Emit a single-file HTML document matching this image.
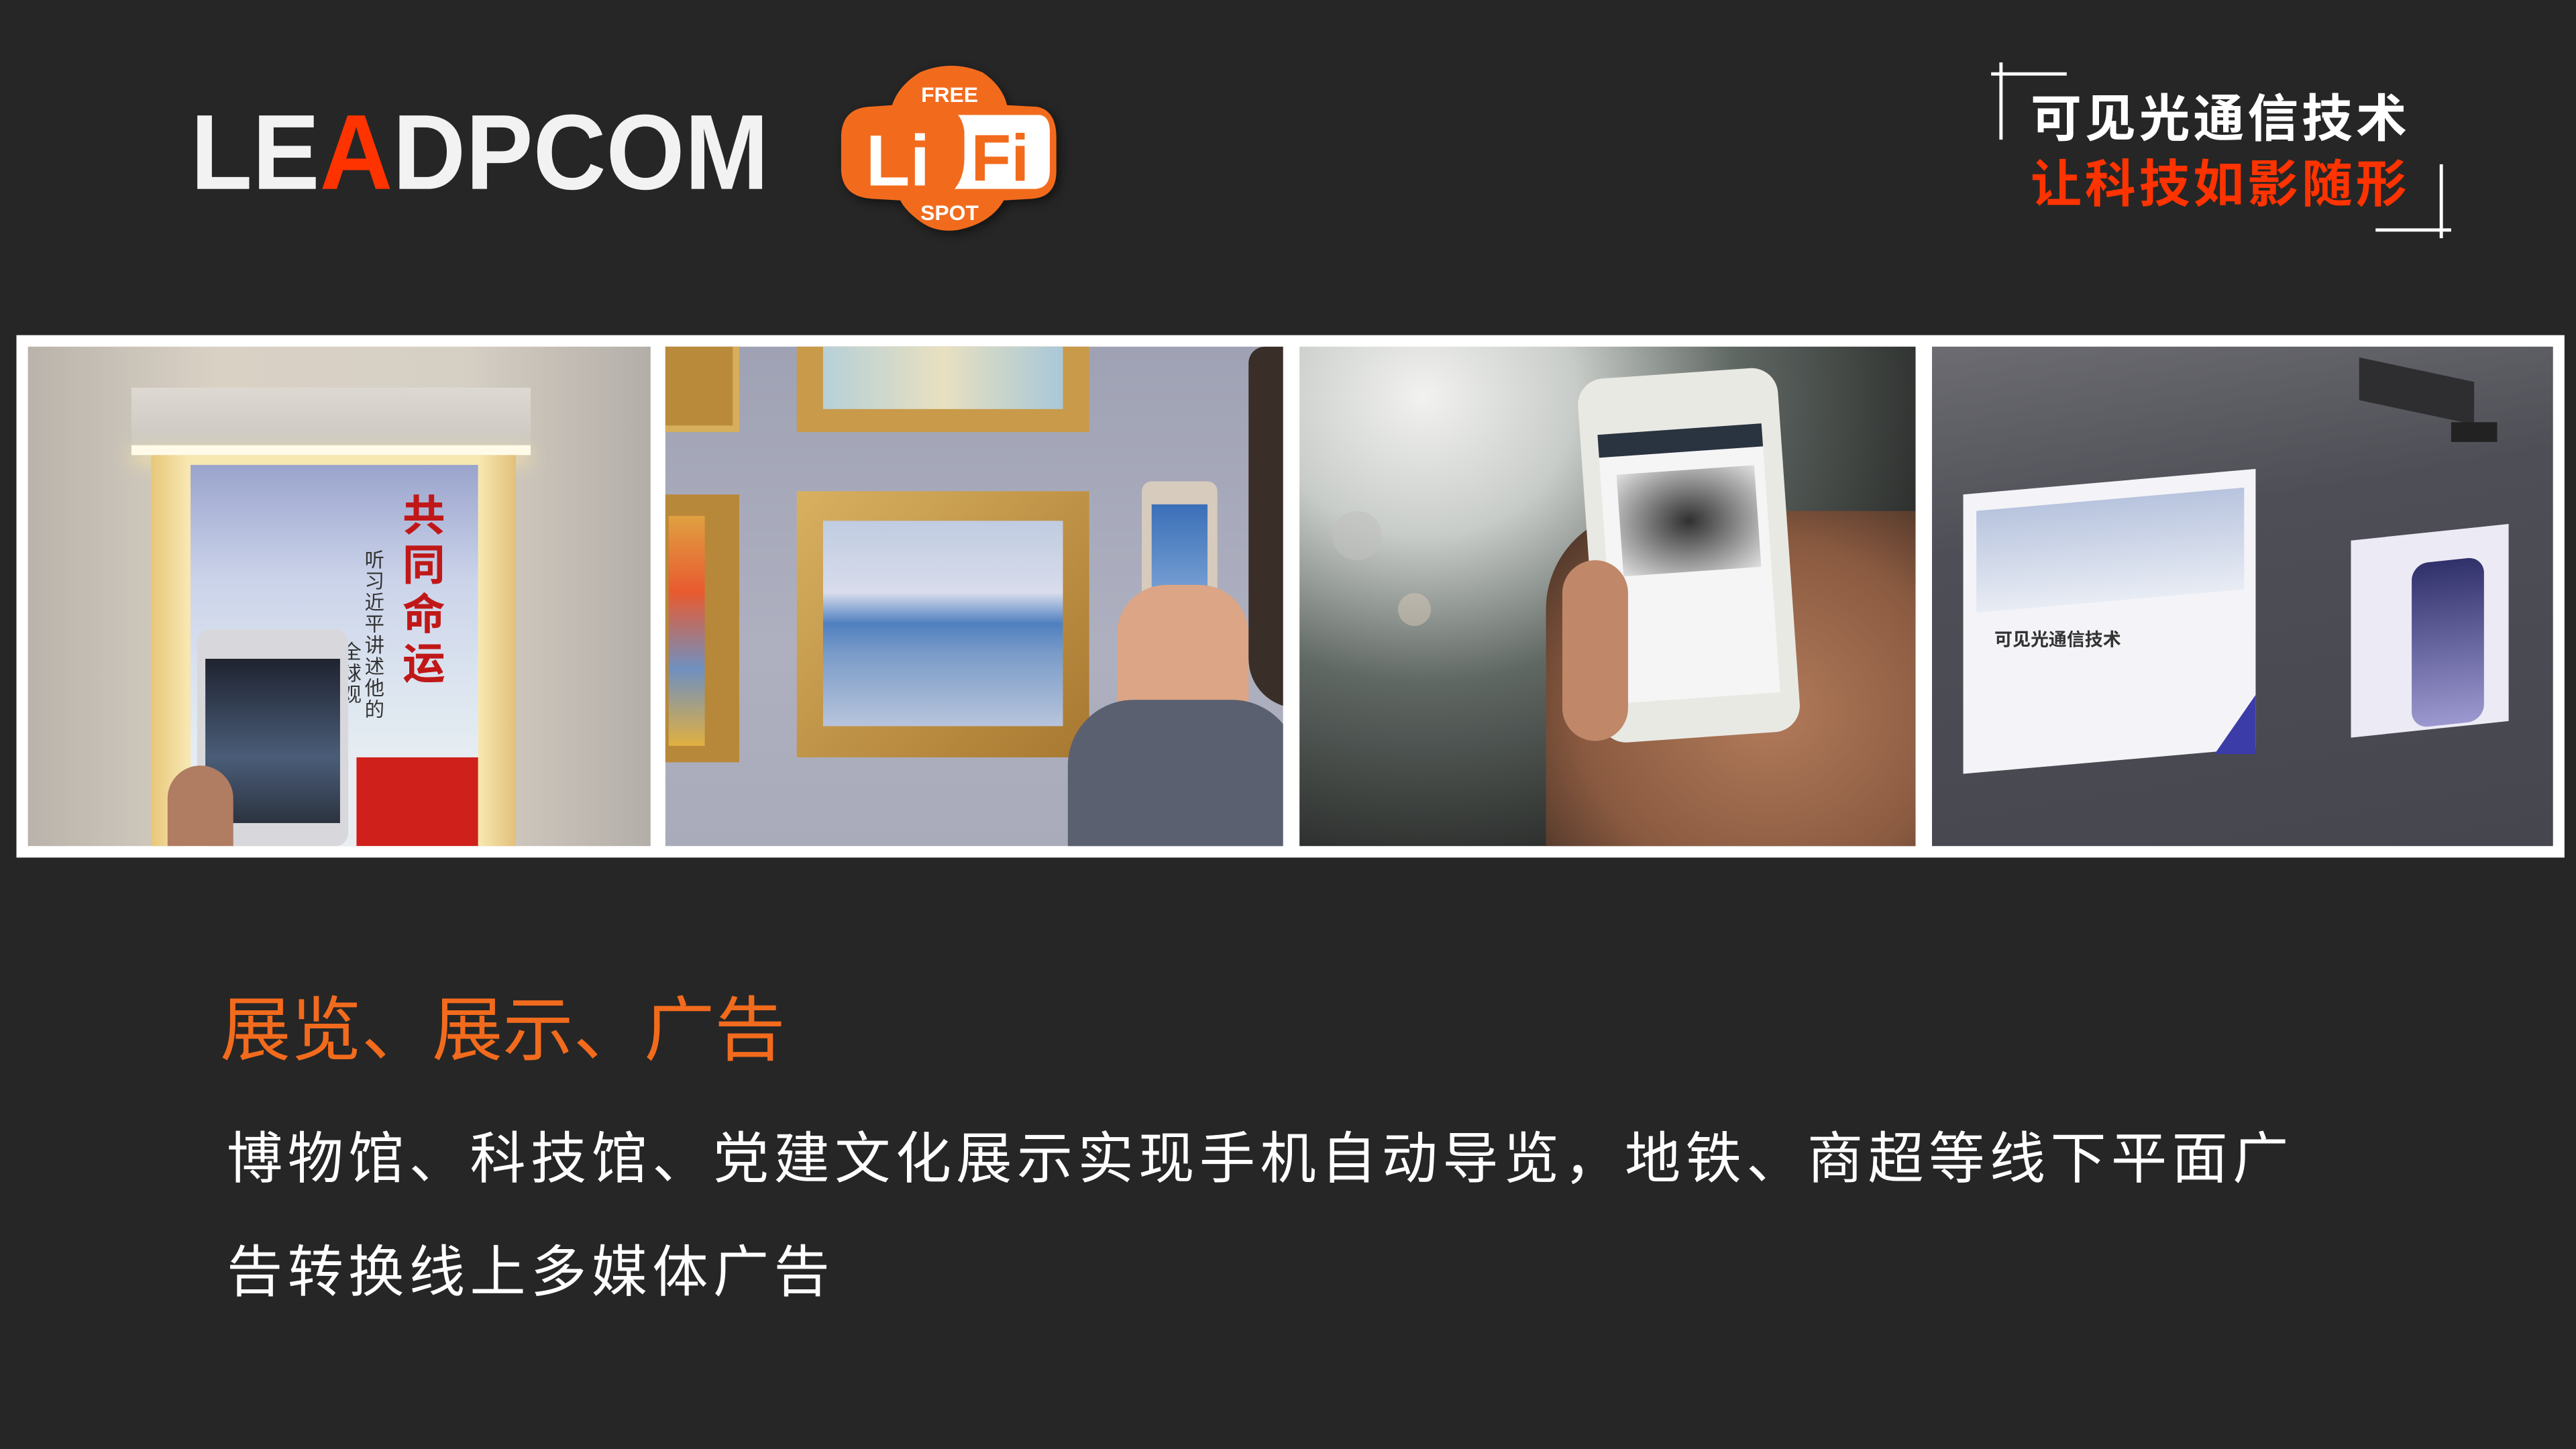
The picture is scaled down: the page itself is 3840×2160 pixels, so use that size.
<!DOCTYPE html>
<html><head><meta charset="utf-8"><style>
html,body{margin:0;padding:0;background:#262626;}
body{width:3840px;height:2160px;overflow:hidden;}
#s{position:absolute;left:0;top:0;width:1568px;height:882px;transform:scale(2.44898);transform-origin:0 0;background:#262626;font-family:"Liberation Sans","Noto Sans CJK SC",sans-serif;}
.a{position:absolute;}
.cjk{font-family:"Liberation Sans","Noto Sans CJK SC",sans-serif;}
.ph{position:absolute;top:211px;height:304px;overflow:hidden;}
</style></head><body><div id="s">

<svg class="a" style="left:110px;top:60px" width="380" height="70">
<text x="6" y="55" textLength="352" lengthAdjust="spacingAndGlyphs" font-family="Liberation Sans" font-weight="bold" font-size="65" fill="#f2f2f2">LE<tspan fill="#ff3300">A</tspan>DPCOM</text>
</svg>

<svg class="a" style="left:505px;top:36px" width="150" height="112" viewBox="0 0 150 112">
<defs><filter id="sh"><feGaussianBlur stdDeviation="3"/></filter></defs>
<path d="M55 10 Q74 2 93 10 Q105 18 110 30 L128 31 Q140 33 140 50 L140 70 Q140 86 125 87 L108 88 Q100 102 80 106 Q66 108 56 100 Q48 94 45 88 L28 87 Q10 86 9 70 L9 48 Q10 32 26 31 L40 30 Q44 18 55 10 Z" fill="#000" opacity=".5" filter="url(#sh)"/>
<path d="M55 8 Q74 0 93 8 Q105 16 108 28 L126 29 Q138 31 138 48 L138 68 Q138 84 123 85 L106 86 Q98 100 78 104 Q64 106 54 98 Q46 92 43 86 L26 85 Q8 84 7 68 L7 46 Q8 30 24 29 L38 28 Q42 16 55 8 Z" fill="#f26b1d"/>
<text x="73" y="26" text-anchor="middle" font-family="Liberation Sans" font-weight="bold" font-size="13" fill="#fff">FREE</text>
<text x="73" y="98" text-anchor="middle" font-family="Liberation Sans" font-weight="bold" font-size="13" fill="#fff">SPOT</text>
<text x="22" y="77" font-family="Liberation Sans" font-weight="bold" font-size="44" fill="#fff">Li</text>
<path d="M78 34 L128 34 Q134 35 134 44 L134 68 Q134 79 124 79 L76 79 Q82 72 82 60 L82 44 Q81 37 78 34 Z" fill="#fff"/>
<text x="86" y="74" font-family="Liberation Sans" font-weight="bold" font-size="40" fill="#f26b1d">Fi</text>
</svg>

<div class="a" style="left:1217px;top:38px;width:2px;height:47px;background:#fff"></div>
<div class="a" style="left:1212px;top:44px;width:46px;height:2px;background:#fff"></div>
<div class="a" style="left:1485px;top:100px;width:2px;height:45px;background:#fff"></div>
<div class="a" style="left:1446px;top:139px;width:46px;height:2px;background:#fff"></div>
<div class="a cjk" style="left:1236px;top:53px;font-size:31px;line-height:40px;font-weight:bold;color:#fff;letter-spacing:2px;white-space:nowrap">可见光通信技术</div>
<div class="a cjk" style="left:1236px;top:93px;font-size:31px;line-height:40px;font-weight:bold;color:#ff3300;letter-spacing:2px;white-space:nowrap">让科技如影随形</div>

<div class="a" style="left:10px;top:204px;width:1551px;height:318px;background:#fff"></div>

<div class="ph" style="left:17px;width:379px;background:linear-gradient(90deg,#b9b3ab 0%,#d9d1c4 30%,#d6cfc4 70%,#b3aea8 100%)">
 <div class="a" style="left:63px;top:25px;width:243px;height:40px;background:linear-gradient(#ddd9d2,#c9c5be)"></div>
 <div class="a" style="left:63px;top:60px;width:243px;height:6px;background:#fffbe8;box-shadow:0 4px 12px #ffe8a0"></div>
 <div class="a" style="left:75px;top:66px;width:222px;height:238px;background:linear-gradient(90deg,#e8c77a,#f7e7b0 10%,#f7e7b0 90%,#e2c07a)"></div>
 <div class="a" style="left:99px;top:72px;width:175px;height:232px;background:linear-gradient(#9aa4cc 0%,#cbd3ea 30%,#dde6f0 60%,#e8eef2 80%)"></div>
 <div class="a" style="left:200px;top:250px;width:74px;height:54px;background:#d0201c"></div>
 <div class="a cjk" style="left:228px;top:88px;width:30px;font-size:26px;line-height:30px;color:#c01818;font-weight:bold">共同命运</div>
 <div class="a cjk" style="left:205px;top:124px;width:14px;font-size:12px;line-height:13px;color:#333">听习近平讲述他的</div>
 <div class="a cjk" style="left:191px;top:180px;width:14px;font-size:12px;line-height:13px;color:#333">全球观</div>
 <div class="a" style="left:103px;top:172px;width:92px;height:132px;border-radius:8px;background:#d8d8dc"></div>
 <div class="a" style="left:108px;top:190px;width:82px;height:100px;background:linear-gradient(#1f2330,#4a5d78 60%,#2c3340)"></div>
 <div class="a" style="left:85px;top:255px;width:40px;height:49px;border-radius:20px 20px 0 0;background:#b07c62"></div>
</div>

<div class="ph" style="left:405px;width:376px;background:linear-gradient(#9fa2b4,#aeb0c0 60%,#a9abbb)">
 <div class="a" style="left:-10px;top:-5px;width:55px;height:57px;background:#b88a3a;border:4px solid #d6ae5c;box-sizing:border-box"></div>
 <div class="a" style="left:80px;top:-5px;width:178px;height:57px;background:#c89a4a;padding:0"></div>
 <div class="a" style="left:96px;top:0px;width:146px;height:38px;background:linear-gradient(90deg,#b6d0d8,#e8e0c0,#a8c8d8)"></div>
 <div class="a" style="left:-10px;top:90px;width:55px;height:163px;background:#b8883a"></div>
 <div class="a" style="left:2px;top:103px;width:22px;height:140px;background:linear-gradient(#e0a040,#e85a30,#7090c0,#e0b040)"></div>
 <div class="a" style="left:80px;top:88px;width:178px;height:162px;background:linear-gradient(135deg,#d8b060,#a87830)"></div>
 <div class="a" style="left:96px;top:106px;width:146px;height:125px;background:linear-gradient(#c0cce0 0%,#d8dcec 35%,#5080c0 50%,#7a9cc8 65%,#b8c4dc 100%)"></div>
 <div class="a" style="left:290px;top:82px;width:46px;height:100px;border-radius:6px;background:#d6cbbd"></div>
 <div class="a" style="left:296px;top:96px;width:34px;height:72px;background:linear-gradient(#3a6fb8,#8cb0dc)"></div>
 <div class="a" style="left:275px;top:145px;width:80px;height:100px;border-radius:30px;background:#dca585"></div>
 <div class="a" style="left:245px;top:215px;width:140px;height:100px;border-radius:40px 40px 0 0;background:#5a6070"></div>
 <div class="a" style="left:355px;top:0;width:30px;height:220px;background:#3a2e28;border-radius:10px 0 0 30px"></div>
</div>

<div class="ph" style="left:791px;width:375px;background:radial-gradient(ellipse at 20% 10%,#f2f2f0 0%,#c8ccc8 22%,#606864 45%,#2a2c2a 75%,#1a1a1a 100%)">
 <div class="a" style="left:20px;top:100px;width:30px;height:30px;border-radius:50%;background:#bfbfbf;opacity:.6"></div>
 <div class="a" style="left:60px;top:150px;width:20px;height:20px;border-radius:50%;background:#d8c8b8;opacity:.5"></div>
 <div class="a" style="left:150px;top:100px;width:225px;height:204px;background:radial-gradient(ellipse at 60% 60%,#b27b5b,#8a5a40 60%,#3a2a22 100%);border-radius:60px 0 0 0"></div>
 <div class="a" style="left:176px;top:16px;width:122px;height:222px;border-radius:16px;background:#e9e9e4;transform:rotate(-4deg)"></div>
 <div class="a" style="left:187px;top:50px;width:100px;height:150px;background:#f5f5f5;transform:rotate(-4deg);border-top:14px solid #2a3340"></div>
 <div class="a" style="left:195px;top:75px;width:84px;height:62px;background:radial-gradient(#303030,#9a9a9a 60%,#e0e0e0);transform:rotate(-4deg)"></div>
 <div class="a" style="left:160px;top:130px;width:40px;height:110px;border-radius:20px;background:#c08868"></div>
</div>

<div class="ph" style="left:1176px;width:378px;background:linear-gradient(170deg,#6c6c72 0%,#4e4e56 35%,#46464e 100%)">
 <div class="a" style="left:260px;top:14px;width:70px;height:26px;background:#2e2e30;transform:skewY(12deg)"></div>
 <div class="a" style="left:316px;top:46px;width:28px;height:12px;background:#222"></div>
 <div class="a" style="left:19px;top:90px;width:178px;height:170px;background:#f4f4f8;transform:skewY(-5deg);transform-origin:0 0"></div>
 <div class="a" style="left:27px;top:100px;width:163px;height:62px;background:linear-gradient(#b8c4de,#e8ecf4);transform:skewY(-5deg);transform-origin:0 0"></div>
 <div class="a cjk" style="left:38px;top:170px;font-size:11px;font-weight:bold;color:#333;white-space:nowrap">可见光通信技术</div>
 <div class="a" style="left:172px;top:212px;width:25px;height:36px;background:#3b3ca8;clip-path:polygon(100% 0,100% 100%,0 100%)"></div>
 <div class="a" style="left:255px;top:118px;width:96px;height:120px;background:#eceaf4;transform:skewY(-6deg);transform-origin:0 0"></div>
 <div class="a" style="left:292px;top:130px;width:44px;height:100px;background:linear-gradient(#30306a,#9c98d0);border-radius:10px;transform:skewY(-6deg)"></div>
</div>

<div class="a cjk" style="left:134px;top:600px;font-size:43px;line-height:56px;color:#f26b1d;letter-spacing:0px;white-space:nowrap">展览、展示、广告</div>
<div class="a cjk" style="left:138px;top:683px;font-size:34px;line-height:46px;color:#fff;letter-spacing:3px;white-space:nowrap">博物馆、科技馆、党建文化展示实现手机自动导览，地铁、商超等线下平面广</div>
<div class="a cjk" style="left:138px;top:752px;font-size:34px;line-height:46px;color:#fff;letter-spacing:3px;white-space:nowrap">告转换线上多媒体广告</div>

</div></body></html>
